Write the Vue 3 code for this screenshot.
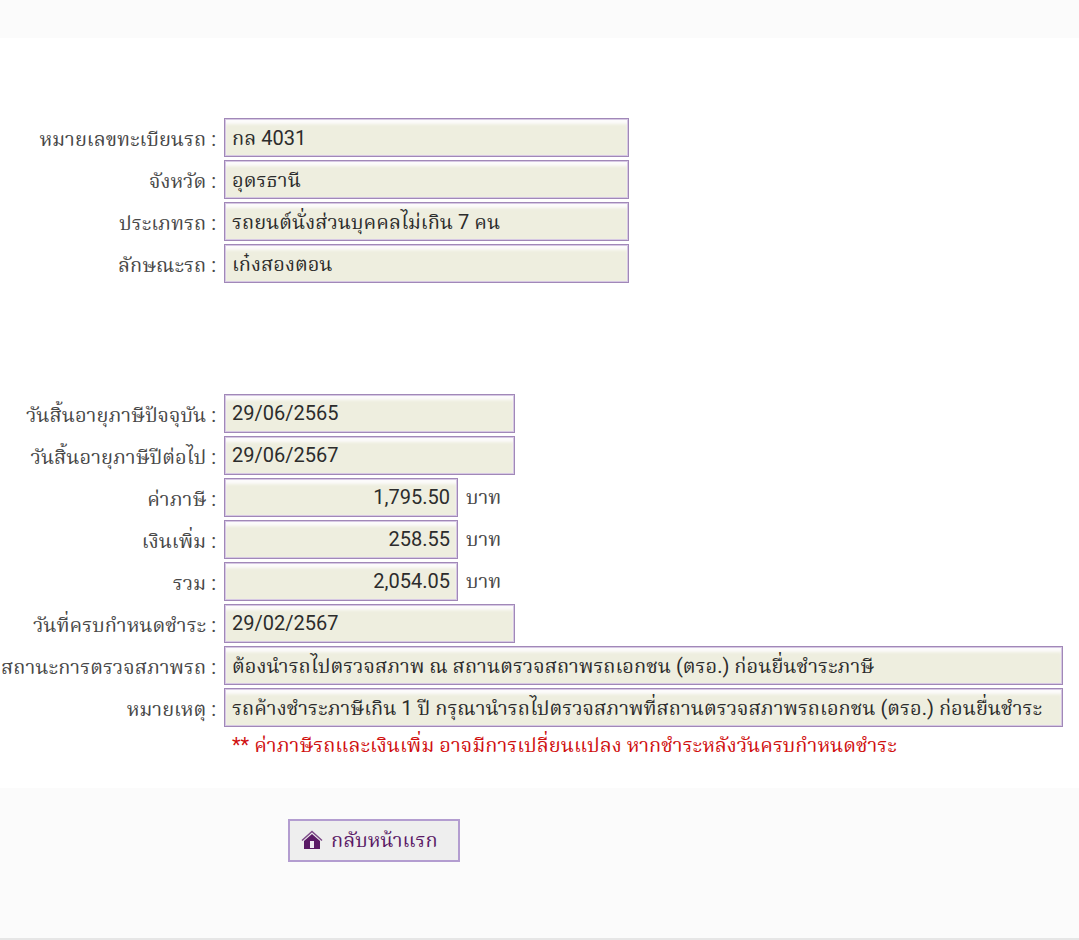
<script setup>
const vehicle = [
  { id: 'plate', label: 'หมายเลขทะเบียนรถ :', value: 'กล 4031', size: 'medium' },
  { id: 'province', label: 'จังหวัด :', value: 'อุดรธานี', size: 'medium' },
  { id: 'type', label: 'ประเภทรถ :', value: 'รถยนต์นั่งส่วนบุคคลไม่เกิน 7 คน', size: 'medium' },
  { id: 'body', label: 'ลักษณะรถ :', value: 'เก๋งสองตอน', size: 'medium' }
]
const tax = [
  { id: 'expiry', label: 'วันสิ้นอายุภาษีปัจจุบัน :', value: '29/06/2565', size: 'short' },
  { id: 'next', label: 'วันสิ้นอายุภาษีปีต่อไป :', value: '29/06/2567', size: 'short' },
  { id: 'tax', label: 'ค่าภาษี :', value: '1,795.50', size: 'money', unit: 'บาท' },
  { id: 'extra', label: 'เงินเพิ่ม :', value: '258.55', size: 'money', unit: 'บาท' },
  { id: 'total', label: 'รวม :', value: '2,054.05', size: 'money', unit: 'บาท' },
  { id: 'due', label: 'วันที่ครบกำหนดชำระ :', value: '29/02/2567', size: 'short' },
  { id: 'status', label: 'สถานะการตรวจสภาพรถ :', value: 'ต้องนำรถไปตรวจสภาพ ณ สถานตรวจสถาพรถเอกชน (ตรอ.) ก่อนยื่นชำระภาษี', size: 'long' },
  { id: 'remark', label: 'หมายเหตุ :', value: 'รถค้างชำระภาษีเกิน 1 ปี กรุณานำรถไปตรวจสภาพที่สถานตรวจสภาพรถเอกชน (ตรอ.) ก่อนยื่นชำระ', size: 'long' }
]
</script>

<template>
  <main class="page">
    <form class="panel" @submit.prevent>
      <section v-for="(group, index) in [vehicle, tax]" :key="index" class="group">
        <div v-for="field in group" :key="field.id" class="row">
          <label :for="field.id">{{ field.label }}</label>
          <input :id="field.id" :class="field.size" type="text" readonly :value="field.value">
          <span v-if="field.unit" class="unit">{{ field.unit }}</span>
        </div>
      </section>
      <p class="note">** ค่าภาษีรถและเงินเพิ่ม อาจมีการเปลี่ยนแปลง หากชำระหลังวันครบกำหนดชำระ</p>
    </form>
    <div class="actions">
      <button type="button">
        <svg width="22" height="20" viewBox="0 0 22 20" aria-hidden="true">
          <path d="M1 10.5 11 1.500l10 9" fill="none" stroke="#7d4a88" stroke-width="1.5" />
          <path d="M3 11 11 4l8 7v8H3z" fill="#5b1a66" />
          <path d="M9 11h4v7H9z" fill="#efeaf2" />
        </svg>
        <span>กลับหน้าแรก</span>
      </button>
    </div>
  </main>
</template>

<style>
body { margin: 0; background: #fbfbfb; }
</style>
<style scoped>
.page { padding-top: 38px; font: 20px/28px Roboto, "Noto Serif Thai", "Noto Sans Thai", sans-serif; color: #484848; overflow: hidden; }
.panel { background: #fff; padding: 80px 16px 29px 0; }
.group + .group { margin-top: 108px; }
.row { display: flex; align-items: flex-start; height: 42px; white-space: nowrap; }
label { box-sizing: border-box; width: 216px; flex: none; display: flex; justify-content: flex-end; margin-right: 8px; padding-top: 7px; }
input { box-sizing: border-box; height: 39px; padding: 4px 7px 0; border: 1px solid #a188b8; border-radius: 0; background: #eeeedf; color: #2c2c2c; font: inherit; box-shadow: inset 0 0 0 1px #d6c8e3, inset 0 5px 3px #fcfbfb; outline: none; min-width: 0; }
.medium { width: 405px; }
.short { width: 291px; }
.money { width: 234px; text-align: right; }
.short, .money { padding: 0 7px 2px; }
.long { flex: 1; }
.unit { margin-left: 8px; padding-top: 5px; }
.note { margin: 1px 0 0 232px; color: #d01010; }
.actions { padding: 31px 0 76px 288px; border-bottom: 2px solid #e6e6e6; }
button { display: flex; align-items: center; gap: 8px; height: 43px; padding: 0 20px 2px 11px; border: 2px solid #b39dd0; background: #eee; color: #5b1a66; font: inherit; }
</style>
